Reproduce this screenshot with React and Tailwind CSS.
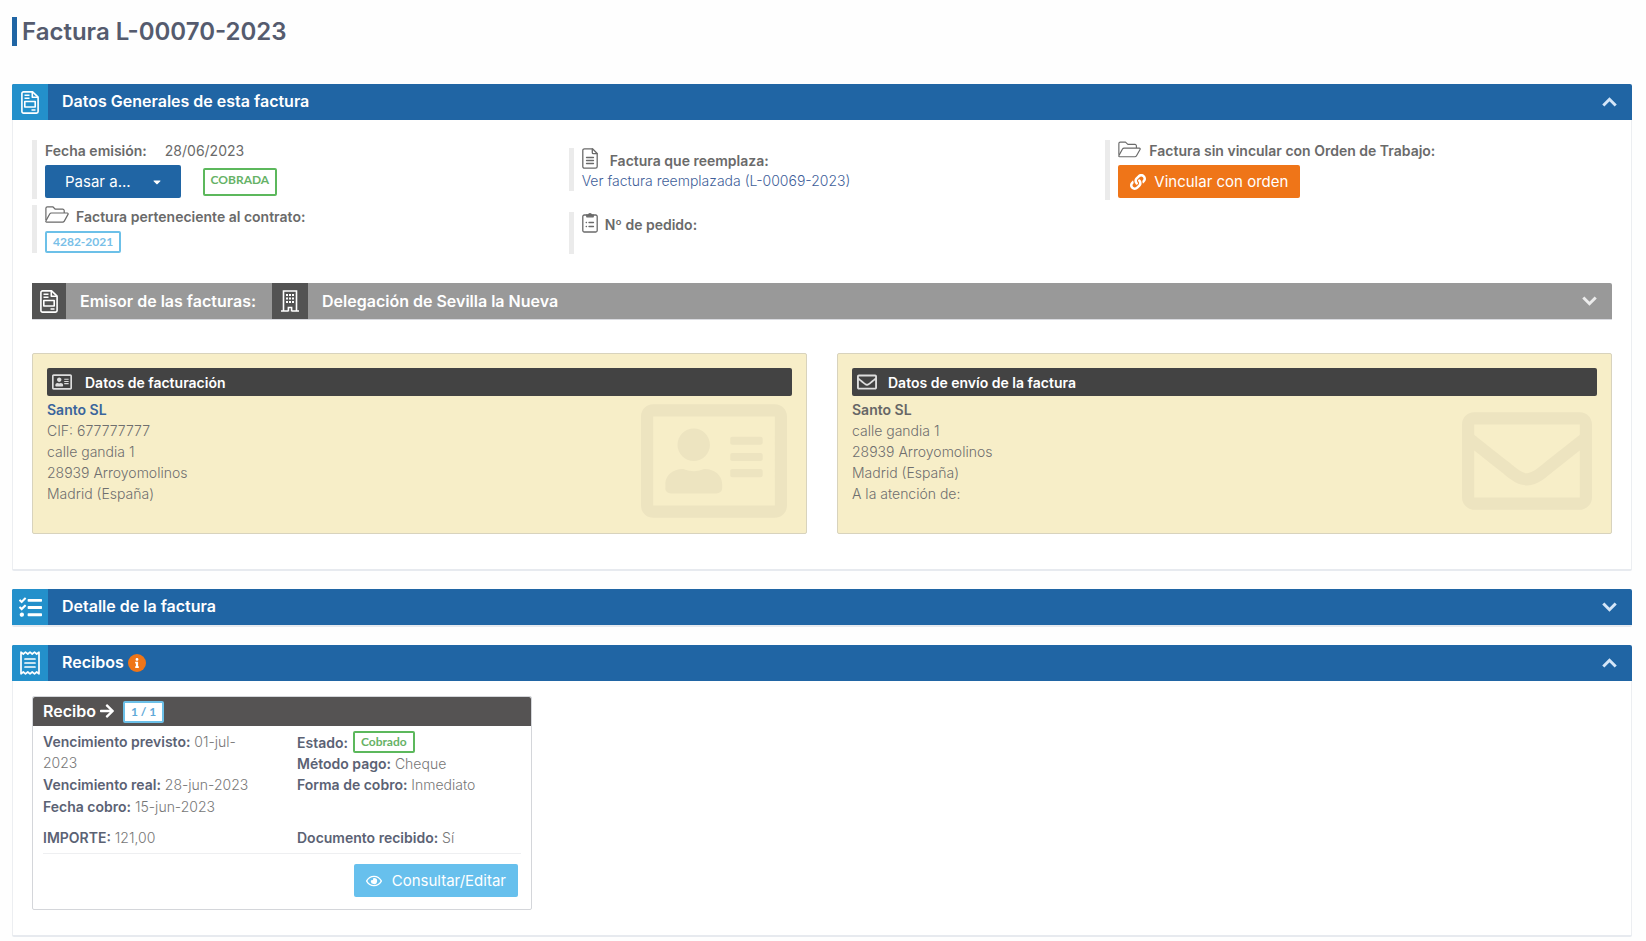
import React, { useState } from 'react';
import {
    FaArrowRight,
    FaCaretDown,
    FaInfo,
    FaLink,
    FaRegAddressCard,
    FaRegEnvelope,
    FaRegEye,
    FaTasks,
} from 'react-icons/fa';

const InvoiceIcon = ({ className }) => (
    <svg viewBox="0 0 18 23" fill="none" stroke="currentColor" strokeWidth="1.6" strokeLinejoin="round" className={className}>
        <path d="M2.6 .9h9L17.1 6.2v14.3a1.6 1.6 0 0 1-1.6 1.6H2.6A1.6 1.6 0 0 1 .9 20.5V2.5A1.6 1.6 0 0 1 2.6 .9z" />
        <path d="M11.3 1v5.3H17M3.5 4.2h5M3.5 7.2h5M10.5 19h4" />
        <path d="M3.8 10.5h10.4V16H3.8z" />
    </svg>
);

const FileIcon = ({ className }) => (
    <svg viewBox="0 0 16 21" fill="none" stroke="currentColor" strokeWidth="1.3" strokeLinejoin="round" strokeLinecap="round" className={className}>
        <path d="M2.5 .8h8l4.7 4.7v13a1.7 1.7 0 0 1-1.7 1.7h-11A1.7 1.7 0 0 1 .8 18.5v-16A1.7 1.7 0 0 1 2.5 .8z" />
        <path d="M10.3 1v3.7a1 1 0 0 0 1 1H15M4.5 9.5h7M4.5 12.5h7M4.5 15.5h7" />
    </svg>
);

const ClipboardIcon = ({ className }) => (
    <svg viewBox="0 0 16 21" fill="none" stroke="currentColor" strokeWidth="1.3" strokeLinejoin="round" strokeLinecap="round" className={className}>
        <path d="M5 3H2.3A1.5 1.5 0 0 0 .8 4.5v14A1.5 1.5 0 0 0 2.3 20h11.4a1.5 1.5 0 0 0 1.5-1.5v-14A1.5 1.5 0 0 0 13.7 3H11" />
        <path d="M4.8 4.8v-2h1.6a1.7 1.7 0 0 1 3.2 0h1.6v2z" fill="currentColor" />
        <path d="M7 10.5h4.5M7 14.5h4.5M4.2 10.5h.3M4.2 14.5h.3" />
    </svg>
);

const FolderIcon = ({ className }) => (
    <svg viewBox="0 0 24 17" fill="none" stroke="currentColor" strokeWidth="1.2" strokeLinejoin="round" className={className}>
        <path d="M.9 14V2.3A1.5 1.5 0 0 1 2.4 .8h5.4l2.5 2.4h7.4a1.5 1.5 0 0 1 1.5 1.5v2.2" />
        <path d="M1 14.6 4.7 8a2 2 0 0 1 1.7-1h15.8a.9.9 0 0 1 .8 1.4l-3.7 6.7a2 2 0 0 1-1.7 1H1.7a.9.9 0 0 1-.7-1.5z" />
    </svg>
);

const BuildingIcon = ({ className }) => (
    <svg viewBox="0 0 18 22" fill="none" stroke="currentColor" strokeWidth="1.6" className={className}>
        <path d="M2.5 21V1h13v20M0 21h7M11 21h7M7.4 21.5v-4h3.2v4" />
        <path d="M5 5h2M8 5h2M11 5h2M5 8.5h2M8 8.5h2M11 8.5h2M5 12h2M8 12h2M11 12h2" strokeWidth="2.2" />
    </svg>
);

const ReceiptIcon = ({ className }) => (
    <svg viewBox="0 0 20 24" fill="none" stroke="currentColor" strokeWidth="1.7" strokeLinejoin="round" strokeLinecap="round" className={className}>
        <path d="M1 1.2 3.3 3l2.2-1.8L7.8 3 10 1.2 12.2 3l2.3-1.8L16.7 3 19 1.2v21.6L16.7 21l-2.2 1.8-2.3-1.8-2.2 1.8L7.8 21l-2.3 1.8L3.3 21 1 22.8z" />
        <path d="M5 8h10M5 12h10M5 16h10" />
    </svg>
);

const Chevron = ({ open, className }) => (
    <svg viewBox="0 0 15 10" fill="none" stroke="currentColor" strokeWidth="3" className={className}>
        <path d={open ? 'M1.3 8.5 7.5 2.3l6.2 6.2' : 'M1.3 1.5 7.5 7.7l6.2-6.2'} />
    </svg>
);

const Panel = ({ title, icon: Icon, iconClass, defaultOpen = false, info, bodyClass, children }) => {
    const [open, setOpen] = useState(defaultOpen);

    return (
        <section className="rounded-xs border-b-2 border-[#e7eaef] bg-white">
            <button
                type="button"
                onClick={() => setOpen(!open)}
                className="flex h-9 w-full items-center rounded-t-xs bg-[#2065a4] pr-[15px] text-left text-white"
            >
                <span className="flex h-9 w-9 items-center justify-center rounded-tl-xs bg-[#2390cb]">
                    <Icon className={iconClass} />
                </span>
                <h2 className="ml-3.5 pb-0.5 text-base leading-5 font-semibold">{title}</h2>
                {info && (
                    <span className="ml-1 flex size-[18px] items-center justify-center rounded-full bg-[#ef7518]">
                        <FaInfo className="size-2.5" />
                    </span>
                )}
                <Chevron open={open} className="ml-auto h-2.5 w-[15px] text-[#d5e6f8]" />
            </button>
            {open && children && <div className={`border-x border-[#eceef1] ${bodyClass}`}>{children}</div>}
        </section>
    );
};

const InfoBlock = ({ className = '', children }) => (
    <div className={`border-l-[5px] border-[#ebebeb] pl-2 ${className}`}>{children}</div>
);

const AddressCard = ({ title, icon: Icon, watermarkClass, titleClass, name, lines }) => (
    <article className="relative h-[181px] rounded-xs border border-[#d8d3bd] bg-[#f7eec8] p-3.5 text-sm leading-[21px]">
        <h3 className={`flex h-7 items-center rounded-xs bg-[#434343] px-[5px] font-semibold text-white ${titleClass}`}>
            <Icon className="size-5 text-[#dddddd]" />
            {title}
        </h3>
        <Icon className={`absolute w-auto text-[#ede4c0] ${watermarkClass}`} />
        <div className="relative mt-[3px] font-light text-[#6f6f6f]">
            {name}
            {lines.map(line => (
                <p key={line}>{line}</p>
            ))}
        </div>
    </article>
);

const Field = ({ label, children }) => (
    <p>
        <strong className="font-semibold text-[#5b6274]">{label}</strong> {children}
    </p>
);

const App = () => {
    const [issuerOpen, setIssuerOpen] = useState(false);

    return (
        <main className="min-h-screen bg-[#fefefe] px-3 pt-4 font-['Inter',sans-serif] text-sm text-[#6a6a6a]">
            <h1 className="mt-px mb-[38px] border-l-[5px] border-[#2065a4] pl-[5px] text-2xl leading-[29px] font-semibold text-[#555b6e]">
                Factura L-00070-2023
            </h1>

            <div className="mr-0.5 space-y-[18px]">
                <Panel
                    title="Datos Generales de esta factura"
                    icon={InvoiceIcon}
                    iconClass="h-[23px] w-[18px]"
                    bodyClass="px-[19px] pt-5 pb-[35px]"
                    defaultOpen
                >
                    <div className="grid grid-cols-3 gap-[30px] leading-5">
                        <div className="space-y-1.5">
                            <InfoBlock>
                                <p className="pt-px pb-1">
                                    <strong className="mr-[18px] font-semibold">Fecha emisión:</strong>
                                    28/06/2023
                                </p>
                                <div className="flex items-center gap-[22px] pb-px">
                                    <button type="button" className="flex h-[33px] items-center gap-5 rounded-xs bg-[#2065a4] pr-[18px] pl-5 text-[15px] text-white">
                                        Pasar a...
                                        <FaCaretDown className="size-3" />
                                    </button>
                                    <span className="flex h-7 items-center rounded-xs border-2 border-[#5cb85c] px-1.5 pb-1 font-['Lato',sans-serif] text-xs font-bold text-[#66b266]">
                                        COBRADA
                                    </span>
                                </div>
                            </InfoBlock>
                            <InfoBlock>
                                <p className="flex items-start gap-[7px] font-semibold">
                                    <FolderIcon className="mt-px h-[17px] w-6" />
                                    <span className="pt-0.5">Factura perteneciente al contrato:</span>
                                </p>
                                <a href="#contrato" className="mt-1 flex h-[22px] w-fit items-center rounded-xs border-2 border-[#6cc0e8] px-1.5 font-['Lato',sans-serif] text-xs font-bold text-[#79bfe8]">
                                    4282-2021
                                </a>
                            </InfoBlock>
                        </div>

                        <div className="space-y-[21px] pt-2">
                            <InfoBlock>
                                <p className="flex items-start gap-3 font-semibold">
                                    <FileIcon className="h-[21px] w-4" />
                                    <span className="pt-[3px]">Factura que reemplaza:</span>
                                </p>
                                <a href="#factura-reemplazada" className="flex font-light text-[#3f5f9a]">
                                    Ver factura reemplazada (L-00069-2023)
                                </a>
                            </InfoBlock>
                            <InfoBlock className="h-[42px]">
                                <p className="flex items-start gap-[7px] font-semibold">
                                    <ClipboardIcon className="h-[21px] w-4" />
                                    <span className="pt-[3px]">Nº de pedido:</span>
                                </p>
                            </InfoBlock>
                        </div>

                        <div>
                            <InfoBlock>
                                <p className="flex items-start gap-2 pt-px pb-1 font-semibold">
                                    <FolderIcon className="h-[17px] w-[23px]" />
                                    Factura sin vincular con Orden de Trabajo:
                                </p>
                                <div className="pb-0.5">
                                    <button type="button" className="flex h-[33px] items-center gap-2 rounded-xs bg-[#ef7518] px-3 text-[15px] text-white">
                                        <FaLink className="size-4" />
                                        Vincular con orden
                                    </button>
                                </div>
                            </InfoBlock>
                        </div>
                    </div>

                    <button
                        type="button"
                        onClick={() => setIssuerOpen(!issuerOpen)}
                        className="mt-[29px] flex h-[37px] w-full items-center rounded-t-xs border-b border-[#d9dadf] bg-[#999999] pr-[15px] text-left text-base leading-5 font-semibold text-white"
                    >
                        <span className="flex h-9 w-[34px] items-center justify-center bg-[#535353]">
                            <InvoiceIcon className="h-[23px] w-[18px]" />
                        </span>
                        <span className="mr-4 ml-3.5">Emisor de las facturas:</span>
                        <span className="flex h-9 w-9 items-center justify-center bg-[#535353]">
                            <BuildingIcon className="h-[22px] w-[18px]" />
                        </span>
                        <span className="ml-3.5">Delegación de Sevilla la Nueva</span>
                        <Chevron open={issuerOpen} className="ml-auto h-2.5 w-[15px] text-[#ececec]" />
                    </button>

                    <div className="mt-[33px] grid grid-cols-2 gap-[30px]">
                        <AddressCard
                            title="Datos de facturación"
                            icon={FaRegAddressCard}
                            titleClass="gap-[13px]"
                            watermarkClass="top-[34px] right-[19px] h-[146px]"
                            name={<a href="#cliente" className="block font-semibold text-[#3a659c]">Santo SL</a>}
                            lines={['CIF: 677777777', 'calle gandia 1', '28939 Arroyomolinos', 'Madrid (España)']}
                        />
                        <AddressCard
                            title="Datos de envío de la factura"
                            icon={FaRegEnvelope}
                            titleClass="gap-[11px]"
                            watermarkClass="top-[42px] right-[19px] h-[130px]"
                            name={<strong className="block font-semibold text-[#666666]">Santo SL</strong>}
                            lines={['calle gandia 1', '28939 Arroyomolinos', 'Madrid (España)', 'A la atención de:']}
                        />
                    </div>
                </Panel>

                <Panel title="Detalle de la factura" icon={FaTasks} iconClass="size-[23px]" />

                <Panel
                    title="Recibos"
                    icon={ReceiptIcon}
                    iconClass="h-6 w-5"
                    bodyClass="px-[19px] pt-[15px] pb-[25px]"
                    defaultOpen
                    info
                >
                    <article className="w-[500px] rounded-xs border border-[#d4d6da] font-light text-[#777777]">
                        <h3 className="flex h-[29px] items-center rounded-t-xs bg-[#555353] px-2.5 text-base font-semibold text-white">
                            <span className="pb-0.5">Recibo</span>
                            <FaArrowRight className="mb-0.5 ml-[3px] size-4" />
                            <span className="ml-2 flex h-[22px] items-center rounded-xs border-2 border-[#6cc0e8] bg-white px-1.5 font-['Lato',sans-serif] text-xs font-bold text-[#5fa9d8]">
                                1 / 1
                            </span>
                        </h3>
                        <div className="px-2.5 pt-[5px] pb-3">
                            <div className="grid grid-cols-2 gap-x-[30px] leading-[21px]">
                                <div className="space-y-px pr-2">
                                    <Field label="Vencimiento previsto:">01-jul-2023</Field>
                                    <Field label="Vencimiento real:">28-jun-2023</Field>
                                    <Field label="Fecha cobro:">15-jun-2023</Field>
                                </div>
                                <div>
                                    <div className="flex items-center gap-[5px]">
                                        <strong className="font-semibold text-[#5b6274]">Estado:</strong>
                                        <span className="flex h-[22px] items-center rounded-xs border-2 border-[#5cb85c] px-1.5 font-['Lato',sans-serif] text-xs font-bold text-[#66b266]">
                                            Cobrado
                                        </span>
                                    </div>
                                    <Field label="Método pago:">Cheque</Field>
                                    <Field label="Forma de cobro:">Inmediato</Field>
                                </div>
                            </div>
                            <div className="mt-2.5 grid grid-cols-2 gap-x-[30px] border-b border-[#eeeff1] pb-[5px] leading-[21px]">
                                <Field label="IMPORTE:">121,00</Field>
                                <Field label="Documento recibido:">Sí</Field>
                            </div>
                            <div className="mt-2.5 mr-[3px] flex justify-end">
                                <button type="button" className="flex h-[33px] items-center gap-2.5 rounded-xs bg-[#67c0ed] px-3 text-[15px] font-normal text-white">
                                    <FaRegEye className="size-4" />
                                    Consultar/Editar
                                </button>
                            </div>
                        </div>
                    </article>
                </Panel>
            </div>
        </main>
    );
};

export default App;
